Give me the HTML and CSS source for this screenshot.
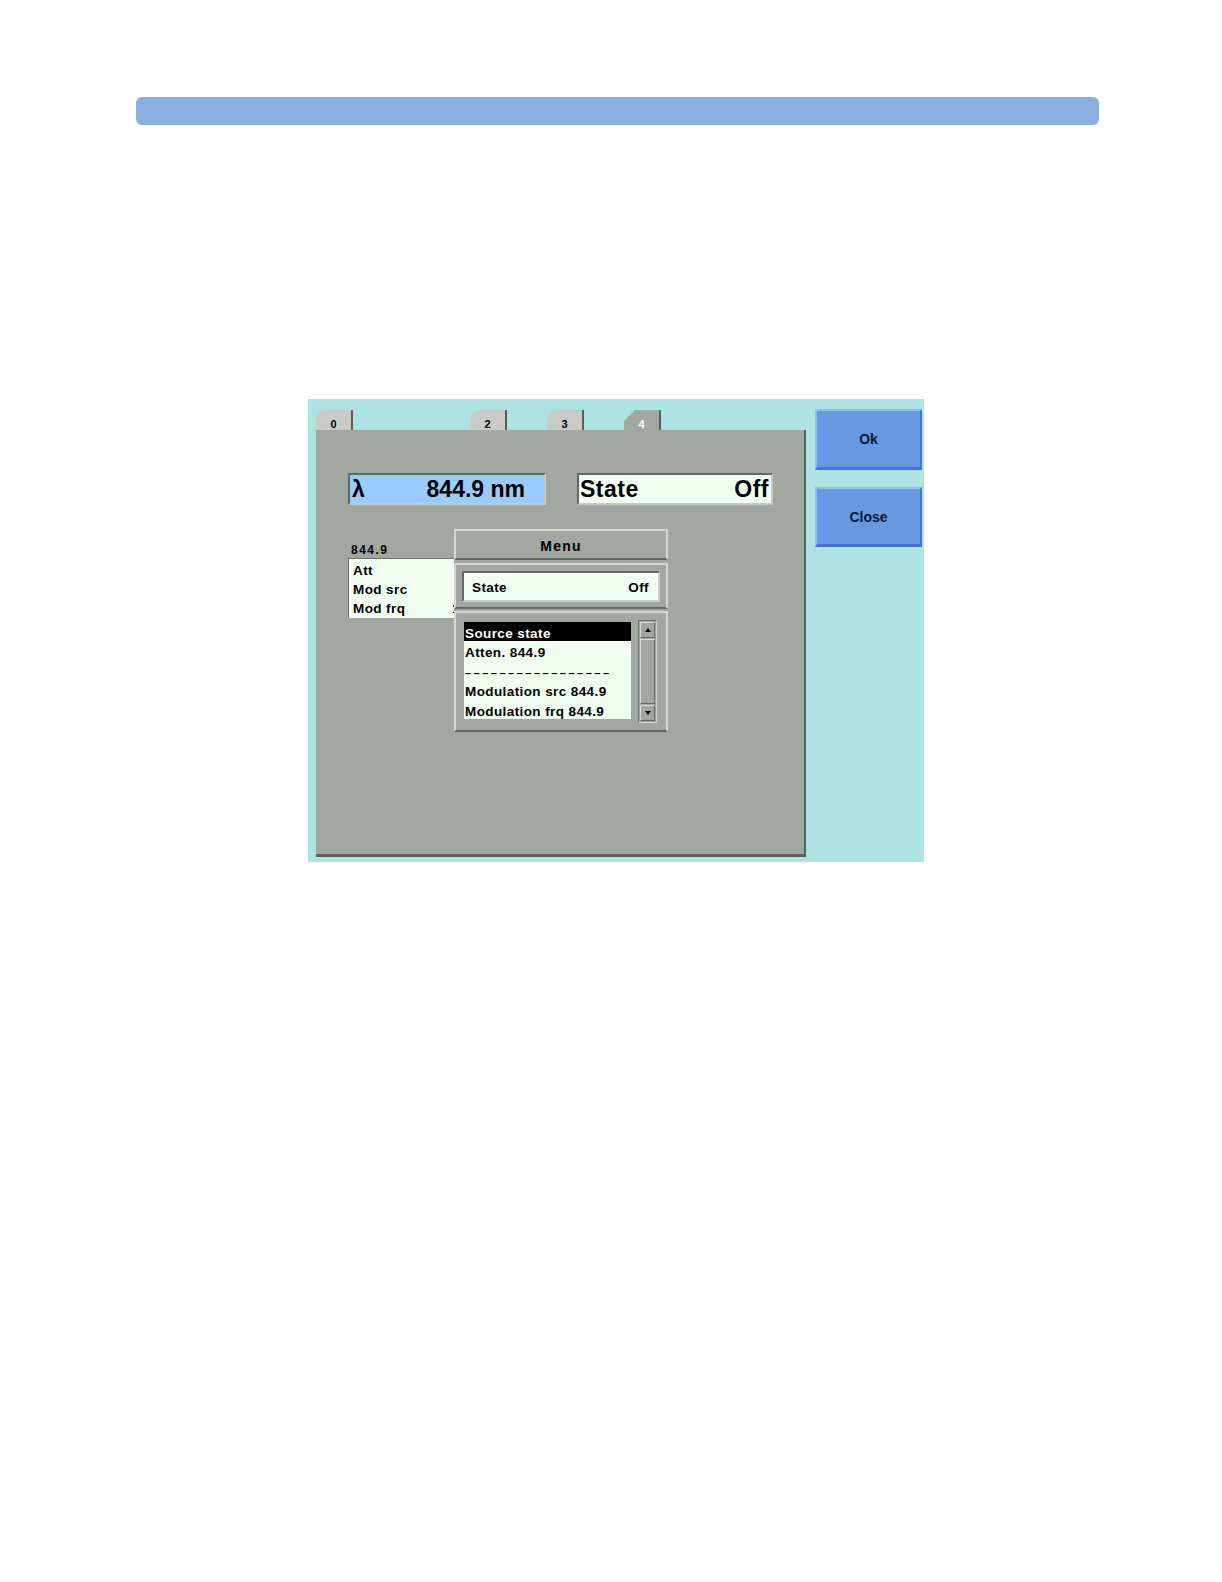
FILE: index.html
```html
<!DOCTYPE html>
<html>
<head>
<meta charset="utf-8">
<title>Source settings</title>
<link rel="stylesheet" href="styles.css">
</head>
<body>
<div class="page">
  <div class="topbar"></div>
  <div class="shot">
    <div class="left">
      <div class="tabs">
        <div class="tab"><span>0</span></div>
        <div class="tab hidden"></div>
        <div class="tab"><span>2</span></div>
        <div class="tab"><span>3</span></div>
        <div class="tab active"><span>4</span></div>
      </div>
      <div class="panel">
        <div class="fields">
          <div class="field lambda"><span class="sym">λ</span><span class="val">844.9 nm</span></div>
          <div class="field state"><span>State</span><span>Off</span></div>
        </div>
        <div class="label">844.9</div>
        <div class="list">
          <div class="row"><span>Att</span></div>
          <div class="row"><span>Mod src</span></div>
          <div class="row"><span>Mod frq</span><span class="v">1</span></div>
        </div>
        <div class="menu">
          <div class="sec m-head">Menu</div>
          <div class="sec m-state">
            <div class="m-field"><span>State</span><span>Off</span></div>
          </div>
          <div class="sec m-list">
            <div class="items">
              <div class="item sel">Source state</div>
              <div class="item">Atten. 844.9</div>
              <div class="item"><span class="dashes">–––––––––––––––––</span></div>
              <div class="item">Modulation src 844.9</div>
              <div class="item">Modulation frq 844.9</div>
            </div>
            <div class="scroll">
              <div class="arrow up"></div>
              <div class="track"></div>
              <div class="arrow down"></div>
            </div>
          </div>
        </div>
      </div>
    </div>
    <div class="buttons">
      <div class="btn ok">Ok</div>
      <div class="btn close">Close</div>
    </div>
  </div>
</div>
</body>
</html>
```

FILE: styles.css
```css
* { box-sizing: border-box; margin: 0; padding: 0; }
body { margin: 0; background: #ffffff; font-family: "Liberation Sans", Arial, sans-serif; color: #000; }
.page { width: 1222px; height: 1582px; padding-top: 97px; }
.topbar { margin-left: 136px; width: 963px; height: 28px; background: #8caee0; border-radius: 6px; }
.shot { margin-top: 274px; margin-left: 308px; width: 616px; height: 463px; background: #aee3e3; display: flex; padding-left: 8px; gap: 9px; }
.left { width: 490px; padding-top: 11px; display: flex; flex-direction: column; }
.tabs { display: grid; grid-template-columns: repeat(5, 77px); height: 20px; }
.tab { width: 37px; height: 20px; background: #c9ccc6; border-right: 2px solid #56615a; border-top-left-radius: 9px; display: flex; align-items: center; justify-content: center; padding-top: 7px; font-size: 11px; font-weight: bold; color: #000; }
.tab.hidden { visibility: hidden; }
.tab.active { background: #a1a89f; color: #fff; border-radius: 0; clip-path: polygon(11px 0, 100% 0, 100% 100%, 0 100%, 0 11px); }
.panel { position: relative; width: 490px; height: 427px; background: #a1a89f; border-right: 2px solid #56615a; border-bottom: 3px solid #56615a; padding: 43px 0 0 32px; }
.fields { display: flex; gap: 31px; }
.field { height: 32px; border-style: solid; border-width: 2px; border-color: #5d6b62 #c3cbc3 #c3cbc3 #5d6b62; display: flex; align-items: center; padding-top: 1px; font-size: 23px; font-weight: bold; }
.lambda { width: 198px; background: #99ccfb; padding-left: 2px; padding-right: 19px; }
.lambda .val { margin-left: auto; }
.state { width: 196px; background: #f0fff0; padding-left: 1px; padding-right: 2px; justify-content: space-between; letter-spacing: 0.5px; }
.label { margin-top: 37px; margin-left: 3px; height: 14px; line-height: 14px; padding-top: 1px; font-size: 12px; font-weight: bold; letter-spacing: 1.5px; }
.list { margin-top: 2px; width: 130px; height: 60px; background: #f0fff0; border-top: 1px solid #6b756e; border-left: 1px solid #6b756e; }
.row { height: 19px; line-height: 19px; padding-left: 4px; padding-top: 2px; font-size: 13.5px; font-weight: bold; letter-spacing: 0.4px; display: grid; grid-template-columns: 99px auto; }
.menu { position: absolute; left: 138px; top: 99px; width: 214px; background: #a1a89f; display: flex; flex-direction: column; }
.sec { background: #a1a89f; border: 2px solid #d3d8d1; border-bottom-color: #5f6b63; }
.m-head { height: 31px; display: flex; align-items: center; justify-content: center; padding-top: 2px; font-size: 14px; font-weight: bold; letter-spacing: 1.2px; }
.m-state { margin-top: 3px; height: 46px; padding: 6px; }
.m-field { height: 31px; background: #f0fff0; border-style: solid; border-width: 2px; border-color: #5f6b63 #c8d0c8 #c8d0c8 #5f6b63; display: flex; justify-content: space-between; align-items: center; padding: 2px 9px 0 8px; font-size: 13.5px; font-weight: bold; letter-spacing: 0.4px; }
.m-list { margin-top: 2px; height: 121px; padding: 9px 9px 0 8px; display: flex; gap: 7px; align-items: flex-start; }
.items { width: 167px; height: 97px; background: #f0fff0; }
.item { height: 19.4px; line-height: 19.4px; padding-left: 1px; padding-top: 2px; font-size: 13.5px; font-weight: bold; letter-spacing: 0.4px; white-space: nowrap; }
.item.sel { background: #000; color: #fff; }
.dashes { font-size: 11px; letter-spacing: 2.5px; }
.scroll { width: 19px; height: 103px; margin-top: -2px; border-style: solid; border-width: 1px; border-color: #6b756e #d0d5cf #d0d5cf #6b756e; padding: 1px; background: #a1a89f; display: flex; flex-direction: column; }
.arrow { height: 16px; border-style: solid; border-width: 1px; border-color: #d8dcd6 #5f6b63 #5f6b63 #d8dcd6; display: flex; align-items: center; justify-content: center; }
.arrow::before { content: ""; border-left: 3px solid transparent; border-right: 3px solid transparent; border-bottom: 4px solid #000; }
.arrow.down::before { border-bottom: 0; border-top: 4px solid #000; }
.track { flex: 1; border-style: solid; border-width: 1px; border-color: #d8dcd6 #5f6b63 #5f6b63 #d8dcd6; margin: 1px 0; }
.buttons { width: 107px; padding-top: 10px; display: flex; flex-direction: column; gap: 17px; }
.btn { height: 61px; background: #6799e0; border-style: solid; border-width: 2px 2px 3px 2px; border-color: #8fbdf4 #4672d8 #4672d8 #8fbdf4; display: flex; align-items: center; justify-content: center; font-size: 14px; font-weight: bold; color: #0b1633; }
.btn.close { height: 60px; }
```
